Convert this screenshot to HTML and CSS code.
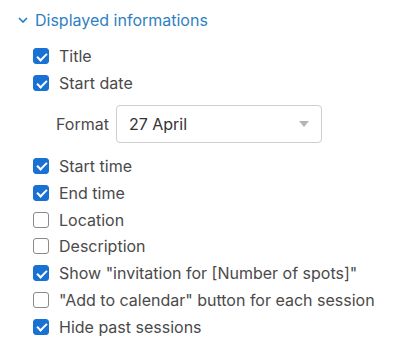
FILE: index.html
```html
<!DOCTYPE html>
<html lang="en">
<head>
    <meta charset="UTF-8">
    <title>Displayed informations</title>
    <link rel="stylesheet" href="styles.css">
</head>
<body>
    <section class="panel">
        <div class="panel-title">
            <svg class="chevron" width="10" height="6" viewBox="0 0 10 6">
                <path d="M1 1l4 4 4-4" fill="none" stroke="currentColor" stroke-width="1.7"/>
            </svg>
            Displayed informations
        </div>
        <ul class="options">
            <li class="option"><span class="box checked"></span>Title</li>
            <li class="option"><span class="box checked"></span>Start date</li>
            <li class="format-row">
                <span class="format-label">Format</span>
                <div class="select">
                    <span>27 April</span>
                    <span class="caret"></span>
                </div>
            </li>
            <li class="option"><span class="box checked"></span>Start time</li>
            <li class="option"><span class="box checked"></span>End time</li>
            <li class="option"><span class="box"></span>Location</li>
            <li class="option"><span class="box"></span>Description</li>
            <li class="option"><span class="box checked"></span>Show "invitation for [Number of spots]"</li>
            <li class="option"><span class="box"></span>"Add to calendar" button for each session</li>
            <li class="option"><span class="box checked"></span>Hide past sessions</li>
        </ul>
    </section>
</body>
</html>
```

FILE: styles.css
```css
* {
    margin: 0;
    padding: 0;
    box-sizing: border-box;
}

body {
    font-family: 'Inter', sans-serif;
    font-size: 16px;
    color: #4a4a4a;
    background: #fff;
}

.panel {
    padding: 10px 0 0 17px;
}

.panel-title {
    display: flex;
    align-items: center;
    gap: 7px;
    font-size: 16px;
    color: #2e7fc4;
    height: 20px;
}

.chevron {
    margin-left: 1px;
    color: #2e7fc4;
}

.options {
    list-style: none;
    padding: 13px 0 0 16px;
}

.option {
    display: flex;
    align-items: center;
    gap: 10px;
    height: 26.8px;
}

.box {
    flex: none;
    width: 16px;
    height: 16px;
    border: 1px solid #8a8a8a;
    border-radius: 3px;
    position: relative;
}

.box.checked {
    background: #1a71d4;
    border-color: #1a71d4;
}

.box.checked:after {
    content: '';
    position: absolute;
    left: 4.5px;
    top: 1.5px;
    width: 4px;
    height: 8px;
    border: solid #fff;
    border-width: 0 2.2px 2.2px 0;
    transform: rotate(45deg);
}

.format-row {
    display: flex;
    align-items: center;
    gap: 7px;
    padding: 8px 0 10px 23px;
}

.select {
    width: 206px;
    height: 38px;
    border: 1px solid #cfcfcf;
    border-radius: 4px;
    display: flex;
    align-items: center;
    justify-content: space-between;
    padding: 0 12px;
    color: #333;
}

.caret {
    width: 0;
    height: 0;
    border-left: 5px solid transparent;
    border-right: 5px solid transparent;
    border-top: 6px solid #b5b5b5;
}
```
